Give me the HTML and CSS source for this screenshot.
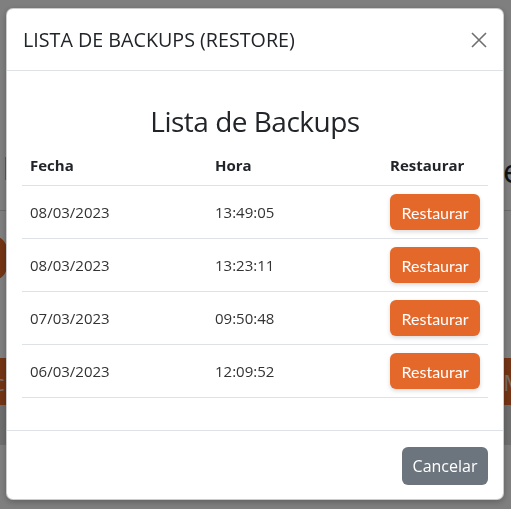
FILE: index.html
```html
<!DOCTYPE html>
<html lang="es">
<head>
<meta charset="utf-8">
<title>Lista de Backups</title>
<link rel="stylesheet" href="styles.css">
</head>
<body>
<div class="page">
  <div class="page-top"></div>
  <div class="page-title-row">
    <span class="page-mark"></span>
    <span class="page-title">e</span>
  </div>
  <div class="page-rule"></div>
  <div class="page-action-row"><span class="page-btn"></span></div>
  <div class="page-strip"><span class="strip-left">c</span><span class="strip-right">M</span></div>
  <div class="page-band"></div>
</div>

<div class="backdrop"></div>

<div class="modal">
  <div class="modal-header">
    <h5 class="modal-title">LISTA DE BACKUPS (RESTORE)</h5>
    <button class="btn-close" type="button" aria-label="Cerrar">
      <svg viewBox="0 0 16 16" width="16" height="16"><path d="M1 1L15 15M15 1L1 15" stroke="currentColor" stroke-width="1.6" fill="none"/></svg>
    </button>
  </div>
  <div class="modal-body">
    <h2 class="list-title">Lista de Backups</h2>
    <table class="backup-table">
      <thead>
        <tr><th class="col-date">Fecha</th><th class="col-time">Hora</th><th class="col-act">Restaurar</th></tr>
      </thead>
      <tbody>
        <tr><td>08/03/2023</td><td>13:49:05</td><td><button class="btn-restore">Restaurar</button></td></tr>
        <tr><td>08/03/2023</td><td>13:23:11</td><td><button class="btn-restore">Restaurar</button></td></tr>
        <tr><td>07/03/2023</td><td>09:50:48</td><td><button class="btn-restore">Restaurar</button></td></tr>
        <tr><td>06/03/2023</td><td>12:09:52</td><td><button class="btn-restore">Restaurar</button></td></tr>
      </tbody>
    </table>
  </div>
  <div class="modal-footer">
    <button class="btn-cancel" type="button">Cancelar</button>
  </div>
</div>
</body>
</html>
```
FILE: styles.css
```css
* { box-sizing: border-box; }
html, body { margin: 0; padding: 0; }
body {
  width: 511px;
  height: 509px;
  overflow: hidden;
  background: #ffffff;
  font-family: "Open Sans", "Noto Sans", sans-serif;
  color: #212529;
}

/* background page (dimmed by the backdrop) */
.page { display: flex; flex-direction: column; }
.page-top { height: 157px; }
.page-title-row {
  height: 28px;
  display: flex;
  justify-content: space-between;
  overflow: hidden;
}
.page-mark { width: 2px; height: 23px; margin-left: 5px; background: #f0a060; }
.page-title {
  font-size: 32px;
  line-height: 28px;
  color: #212529;
  margin-right: -10px;
}
.page-rule { margin-top: 25px; height: 1px; background: #d6d6d6; }
.page-action-row { padding-top: 25px; height: 147px; display: flex; }
.page-btn {
  width: 40px; height: 44px; border-radius: 14px; background: #e8692a;
  margin-left: -33px;
}
.page-strip {
  height: 47px;
  background: #e8692a;
  display: flex;
  justify-content: space-between;
  align-items: center;
  color: #f3d8c8;
  font-size: 22px;
  overflow: hidden;
}
.strip-left { margin-left: -6px; }
.strip-right { margin-right: -12px; }
.page-band { height: 40px; background: #dcdcdc; }

.backdrop {
  position: fixed;
  inset: 0;
  background: rgba(0, 0, 0, 0.5);
}

/* modal */
.modal {
  position: fixed;
  left: 6px;
  top: 8px;
  width: 498px;
  height: 492px;
  background: #ffffff;
  border: 1px solid rgba(0, 0, 0, 0.2);
  border-radius: 7px;
  box-shadow: 0 2px 6px rgba(0, 0, 0, 0.25);
  display: flex;
  flex-direction: column;
}
.modal-header {
  height: 62px;
  padding: 0 15px 0 16px;
  display: flex;
  align-items: center;
  justify-content: space-between;
  border-bottom: 1px solid #dee2e6;
}
.modal-title {
  margin: 0;
  font-size: 19.7px;
  font-weight: 400;
  line-height: 1.5;
  color: #212529;
}
.btn-close {
  border: 0;
  background: transparent;
  padding: 0;
  width: 16px;
  height: 16px;
  color: #6f6f6f;
  margin-right: 1px;
  display: flex;
}
.modal-body {
  flex: 1;
  padding: 15px 15px 0;
}
.list-title {
  margin: 16px 0 5px;
  text-align: center;
  font-size: 28px;
  letter-spacing: -0.5px;
  font-weight: 400;
  line-height: 38px;
}
.backup-table {
  width: 100%;
  border-collapse: collapse;
  font-size: 15px;
}
.backup-table th {
  text-align: left;
  font-weight: 700;
  padding: 8px;
  line-height: 24px;
  border-bottom: 1px solid #dee2e6;
}
.backup-table td {
  padding: 8px;
  line-height: 24px;
  border-bottom: 1px solid #dee2e6;
  vertical-align: middle;
  color: #333333;
}
.col-date { width: 185px; }
.col-time { width: 175px; }
.btn-restore {
  display: block;
  width: 90px;
  height: 36px;
  border: 0;
  border-radius: 6px;
  background: #e5682b;
  color: #ffffff;
  font-family: "Lato", sans-serif;
  font-size: 16px;
  box-shadow: 0 2px 4px rgba(0, 0, 0, 0.15);
}
.modal-footer {
  height: 69px;
  border-top: 1px solid #dee2e6;
  display: flex;
  align-items: flex-start;
  justify-content: flex-end;
  padding: 16px 15px 0;
}
.btn-cancel {
  width: 86px;
  height: 38px;
  border: 0;
  border-radius: 6px;
  background: #6c757d;
  color: #ffffff;
  font-family: "Open Sans", "Noto Sans", sans-serif;
  font-size: 16px;
}
```
